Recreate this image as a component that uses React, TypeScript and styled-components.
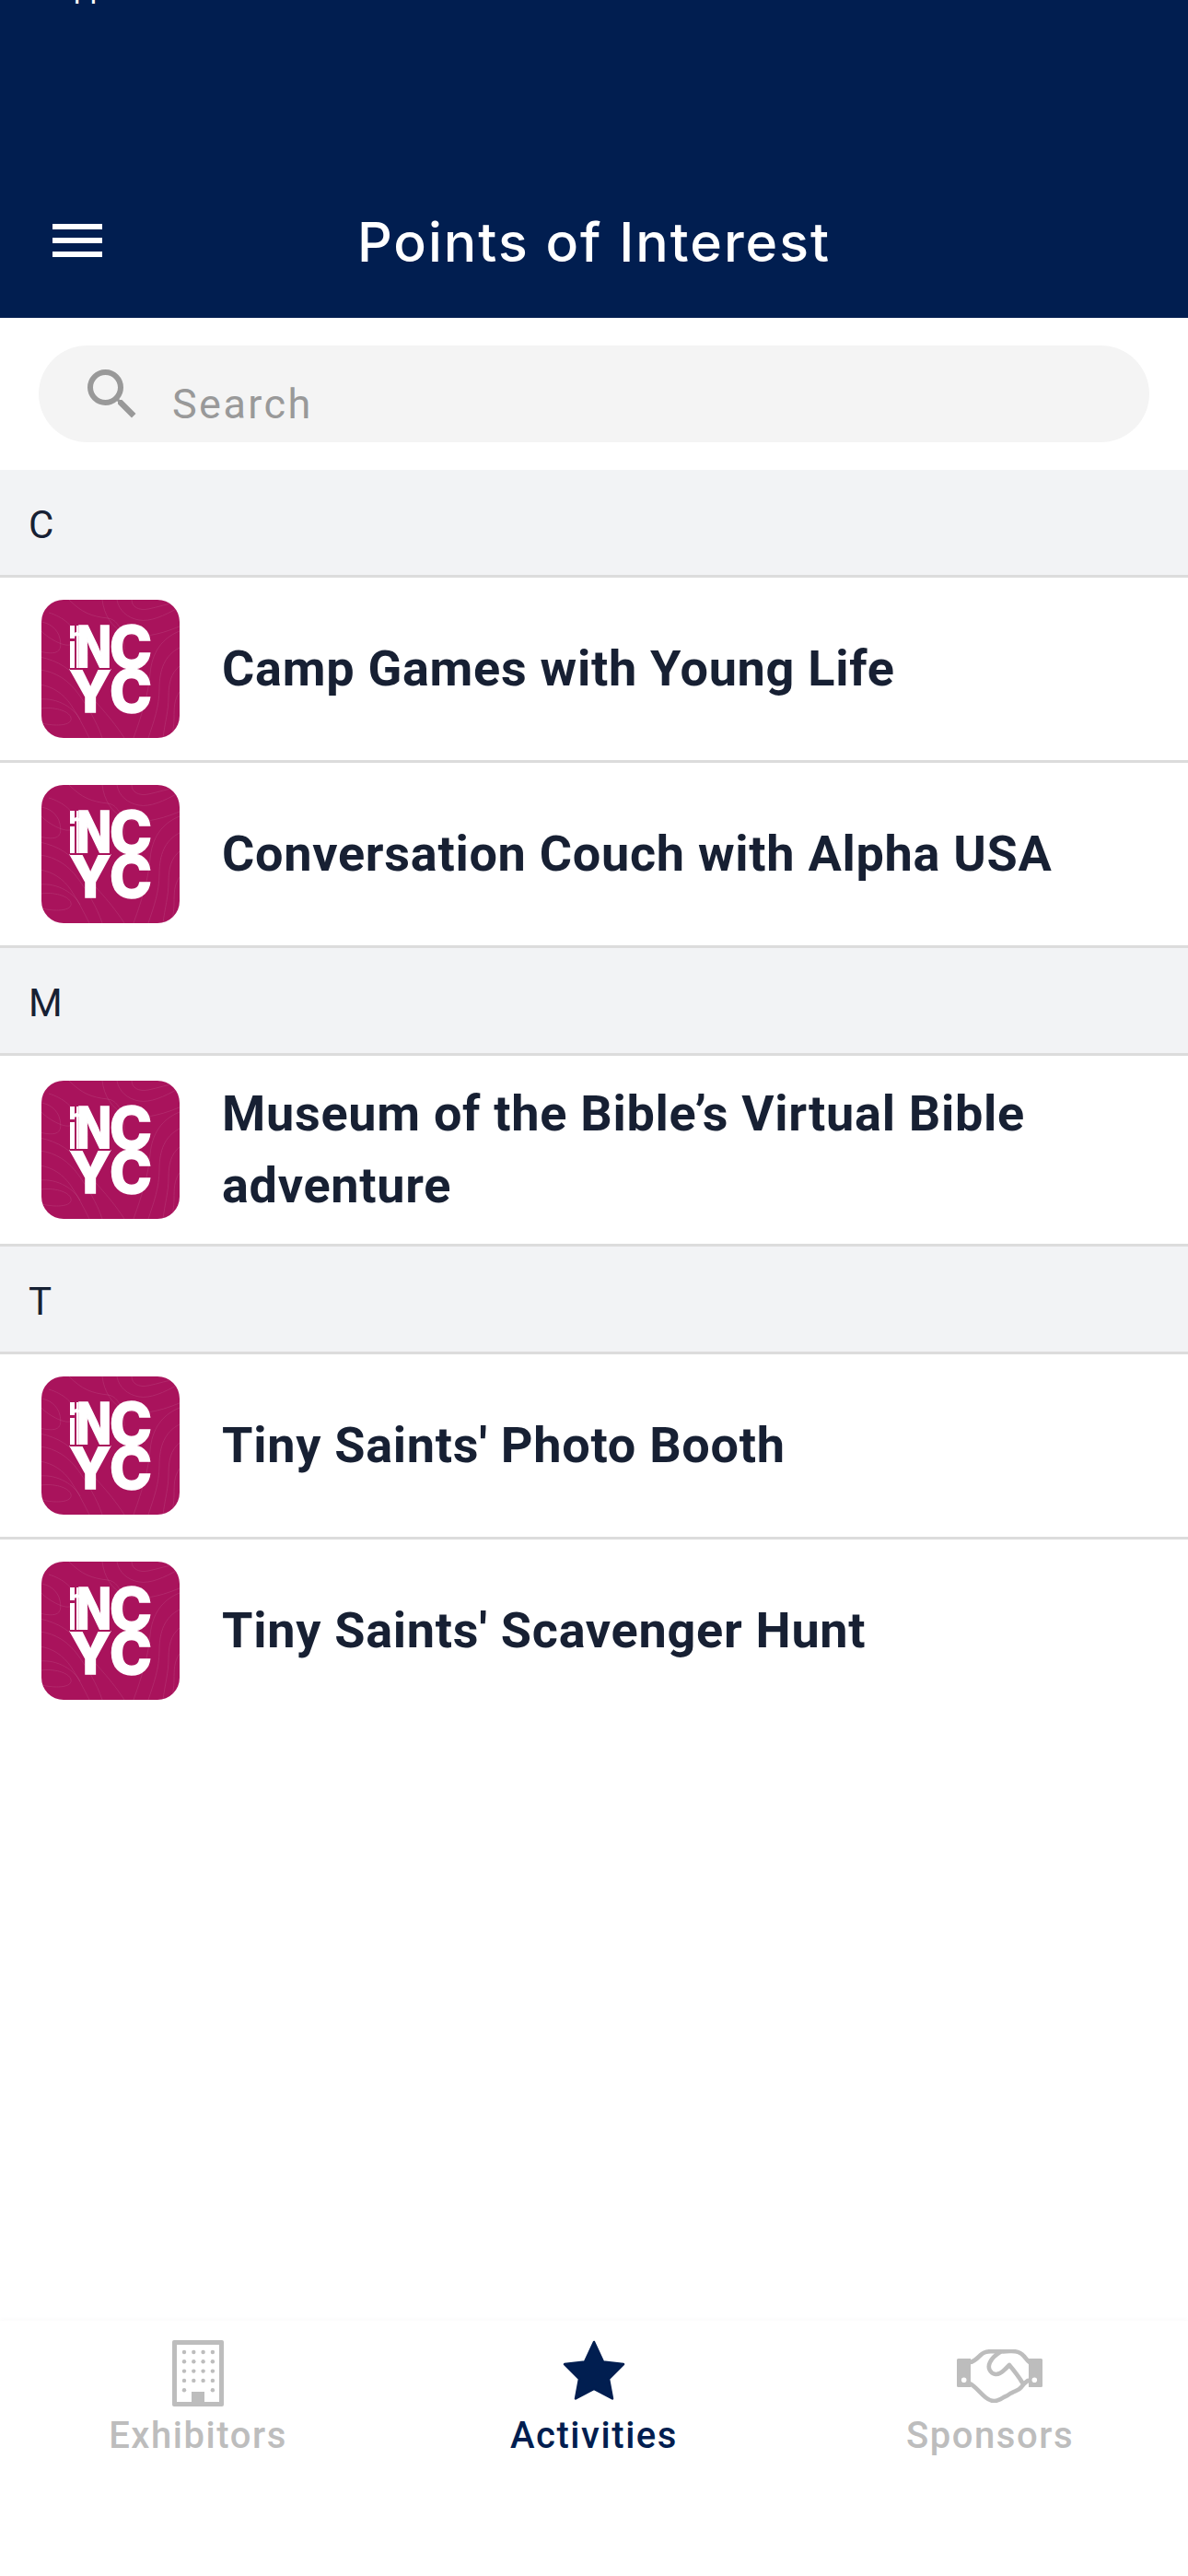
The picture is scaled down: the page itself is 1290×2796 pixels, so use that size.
import React from 'react';
import styled, { createGlobalStyle } from 'styled-components';

const Global = createGlobalStyle`
  html, body { margin: 0; padding: 0; background: #fff; }
  * { box-sizing: border-box; }
`;

const Page = styled.div`
  width: 1290px;
  height: 2796px;
  display: flex;
  flex-direction: column;
  background: #fff;
  overflow: hidden;
  font-family: Roboto, "Liberation Sans", sans-serif;
`;

const Header = styled.header`
  position: relative;
  height: 345px;
  flex: none;
  background: #011e50;
  overflow: hidden;
`;

const ClippedStatus = styled.div`
  position: absolute;
  left: 25px;
  top: -33px;
  font-size: 32px;
  line-height: 40px;
  color: #fff;
  white-space: nowrap;
`;

const TitleBar = styled.div`
  position: absolute;
  left: 0;
  right: 0;
  bottom: 0;
  height: 120px;
  display: flex;
  align-items: center;
  justify-content: center;
`;

const MenuButton = styled.div`
  position: absolute;
  left: 57px;
  top: 18px;
  width: 54px;
  height: 36px;
  display: flex;
  flex-direction: column;
  justify-content: space-between;
`;

const MenuBar = styled.span`
  display: block;
  height: 6px;
  background: #fff;
`;

const Title = styled.h1`
  margin: 0;
  position: relative;
  top: -22px;
  font-family: Inter, "Open Sans", sans-serif;
  font-weight: 500;
  font-size: 59px;
  line-height: 70px;
  letter-spacing: 2px;
  color: #fff;
`;

const SearchWrap = styled.div`
  flex: none;
  height: 165px;
  padding: 30px 42px;
`;

const SearchBox = styled.div`
  height: 105px;
  border-radius: 53px;
  background: #f4f4f4;
  display: flex;
  align-items: center;
  padding-left: 53px;
`;

const SearchLabel = styled.span`
  margin-left: 38px;
  margin-top: 22px;
  font-size: 45px;
  line-height: 50px;
  letter-spacing: 2.4px;
  color: #999;
`;

const SectionHeader = styled.div`
  height: 117px;
  flex: none;
  background: #f2f3f5;
  border-bottom: 3px solid #dcdcdc;
  padding: 35px 0 0 31px;
  font-size: 42px;
  line-height: 50px;
  color: #172033;
`;

const Row = styled.div<{ $tall?: boolean; $last?: boolean }>`
  flex: none;
  height: ${p => (p.$tall ? 207 : 201)}px;
  display: flex;
  align-items: center;
  padding: 0 60px 0 45px;
  border-bottom: 3px solid ${p => (p.$last ? 'transparent' : '#dcdcdc')};
`;

const RowTitle = styled.div`
  margin-left: 46px;
  font-size: 54px;
  line-height: 78px;
  font-weight: 700;
  letter-spacing: 0.72px;
  color: #172033;
`;

const TabBar = styled.nav`
  margin-top: auto;
  height: 277px;
  flex: none;
  display: grid;
  grid-template-columns: repeat(3, 1fr);
  padding-top: 21px;
  box-shadow: 0 -3px 4px rgba(0, 0, 0, 0.015);
`;

const Tab = styled.div<{ $active?: boolean }>`
  display: flex;
  flex-direction: column;
  align-items: center;
  color: ${p => (p.$active ? '#011e50' : '#bdbdbd')};
`;

const TabIcon = styled.div`
  height: 82px;
  display: flex;
  align-items: flex-start;
  justify-content: center;
`;

const HandshakeSvg = styled.svg`
  margin: 10px 0 0 20px;
`;

const TabLabel = styled.span`
  margin-top: -3px;
  font-size: 40px;
  line-height: 50px;
  font-weight: 500;
  letter-spacing: 1.55px;
`;

const LogoSvg = styled.svg`
  flex: none;
`;

const Logo = () => (
  <LogoSvg width="150" height="150" viewBox="0 0 150 150">
    <defs>
      <clipPath id="logoClip">
        <rect width="150" height="150" rx="24" />
      </clipPath>
    </defs>
    <rect width="150" height="150" rx="24" fill="#a9135c" />
    <g clipPath="url(#logoClip)" fill="none" stroke="#fff" strokeOpacity=".09" strokeWidth="1">
      <path d="M8 14c14 4 32 16 28 30S4 40-2 32" />
      <path d="M-2 62c20 4 36 14 46 30s28 30 46 58" />
      <path d="M-2 76c18 2 32 12 42 26s20 30 26 48" />
      <path d="M-2 92c14 2 26 10 34 22s14 24 20 36" />
      <path d="M0 118c12-2 30 2 32 10s-14 10-32 6" />
      <path d="M-2 108c20-2 38 10 44 22" />
      <path d="M66 0c2 16 10 30 24 36s34 4 62-8" />
      <path d="M82 0c2 12 12 20 24 22s26-4 44-14" />
      <path d="M98 0c0 8 8 12 18 10s22-6 34-8" />
      <path d="M150 34c-20 8-30 24-32 46s-8 42-18 70" />
      <path d="M150 52c-16 8-22 24-22 44s-6 36-12 54" />
      <path d="M150 72c-10 8-12 20-12 34s-4 28-6 44" />
      <path d="M150 100c-6 8-6 18-6 28s-2 16-2 22" />
      <path d="M30 0c14 14 24 18 42 20s18 34 18 34" />
      <path d="M-2 24c10 0 20 8 22 18s2 20-22 14" />
    </g>
    <g fill="#fff">
      <rect x="31" y="28" width="5" height="14" />
      <rect x="31" y="45" width="5" height="29" />
      <rect x="38" y="28" width="2" height="46" />
      <path d="M31 40l20-2v-1l-11-1v-2l-9 4z" />
    </g>
    <g fill="#fff" fontFamily="Inter, Roboto, sans-serif" fontWeight="800" fontSize="63" stroke="#fff" strokeWidth="1.4">
      <text x="38" y="74" textLength="38" lengthAdjust="spacingAndGlyphs">N</text>
      <text x="74" y="74" textLength="46" lengthAdjust="spacingAndGlyphs">C</text>
      <text x="30" y="122" textLength="46" lengthAdjust="spacingAndGlyphs">Y</text>
      <text x="74" y="122" textLength="46" lengthAdjust="spacingAndGlyphs">C</text>
    </g>
    <rect x="31" y="74" width="44" height="2" fill="#a9135c" />
  </LogoSvg>
);

const SearchIcon = () => (
  <svg width="54" height="54" viewBox="3 3 18 18" fill="#999">
    <path d="M15.5 14h-.79l-.28-.27A6.471 6.471 0 0 0 16 9.5 6.5 6.5 0 1 0 9.5 16c1.61 0 3.09-.59 4.23-1.57l.27.28v.79l5 4.99L20.49 19l-4.99-5zm-6 0C7.01 14 5 11.99 5 9.5S7.01 5 9.5 5 14 7.01 14 9.5 11.99 14 9.5 14z" />
  </svg>
);

const BuildingIcon = () => {
  const dots: React.ReactElement[] = [];
  [0, 1, 2, 3, 4].forEach(r =>
    [0, 1, 2, 3].forEach(c => {
      if (r === 4 && (c === 1 || c === 2)) return;
      dots.push(<circle key={`${r}-${c}`} cx={13 + c * 10.3} cy={13 + r * 10.3} r={2.2} />);
    })
  );
  return (
    <svg width="56" height="72" viewBox="0 0 56 72" fill="currentColor">
      <path fillRule="evenodd" d="M2 0h52a2 2 0 0 1 2 2v68a2 2 0 0 1-2 2H2a2 2 0 0 1-2-2V2a2 2 0 0 1 2-2zm3 5v62h46V5z" />
      {dots}
      <rect x="21" y="56" width="14" height="12" />
    </svg>
  );
};

const StarIcon = () => (
  <svg width="68" height="66" viewBox="0 0 68 66" fill="currentColor" stroke="currentColor" strokeWidth="2.5" strokeLinejoin="round">
    <path d="M34 2l10 21.500 22 2.600-16 15.900 4 21.500L34 53 14 63.500 18 42 2 26.100l22-2.600z" />
  </svg>
);

const HandshakeIcon = () => (
  <HandshakeSvg width="93" height="58" viewBox="0 0 93 58">
    <g fill="currentColor">
      <path fillRule="evenodd" d="M1.500 10H15v31H1.500A1.500 1.500 0 0 1 0 39.500v-28A1.500 1.500 0 0 1 1.500 10zM7.700 30.500a2.800 2.800 0 1 0 0 5.600 2.800 2.800 0 0 0 0-5.600z" />
      <path fillRule="evenodd" d="M78 10h13.500a1.500 1.500 0 0 1 1.500 1.500v28a1.500 1.500 0 0 1-1.500 1.500H78zM84.300 30.500a2.800 2.800 0 1 0 0 5.600 2.800 2.800 0 0 0 0-5.600z" />
    </g>
    <g fill="none" stroke="currentColor" strokeWidth="4.600" strokeLinejoin="round" strokeLinecap="round">
      <path d="M14 14c4 0 8-4 12-8 3-3 7-3.800 11-3.800h7c5 0 6 .5 13-.2 8-.5 12 1 16 5.500 2 2.500 3 4.500 6 6.500" />
      <path d="M47 3c-5 3-9 7-11 11-3 6 0 12 6 13 5 .5 8-3 11-6l4-4c5 6 10 12 14 19" />
      <path d="M14 37c6 3 11 10 17 15 5 4 10 5 14 3 4-1 5-3 8-4 3-1 4-3 7-4 3-2 7-2 10-6 2-3 4-5 7-7" />
    </g>
  </HandshakeSvg>
);

const items = {
  C: ['Camp Games with Young Life', 'Conversation Couch with Alpha USA'],
  T: ["Tiny Saints' Photo Booth", "Tiny Saints' Scavenger Hunt"],
};

const ListRow = ({ text, tall, last }: { text: string; tall?: boolean; last?: boolean }) => (
  <Row $tall={tall} $last={last}>
    <Logo />
    <RowTitle>{text}</RowTitle>
  </Row>
);

export default function App() {
  return (
    <Page>
      <Global />
      <Header>
        <ClippedStatus>Shoppers at the Venue</ClippedStatus>
        <TitleBar>
          <MenuButton>
            <MenuBar />
            <MenuBar />
            <MenuBar />
          </MenuButton>
          <Title>Points of Interest</Title>
        </TitleBar>
      </Header>
      <SearchWrap>
        <SearchBox>
          <SearchIcon />
          <SearchLabel>Search</SearchLabel>
        </SearchBox>
      </SearchWrap>
      <SectionHeader>C</SectionHeader>
      {items.C.map(t => <ListRow key={t} text={t} />)}
      <SectionHeader>M</SectionHeader>
      <ListRow tall text="Museum of the Bible’s Virtual Bible adventure" />
      <SectionHeader>T</SectionHeader>
      {items.T.map((t, i) => <ListRow key={t} text={t} last={i === 1} />)}
      <TabBar>
        <Tab>
          <TabIcon><BuildingIcon /></TabIcon>
          <TabLabel>Exhibitors</TabLabel>
        </Tab>
        <Tab $active>
          <TabIcon><StarIcon /></TabIcon>
          <TabLabel>Activities</TabLabel>
        </Tab>
        <Tab>
          <TabIcon><HandshakeIcon /></TabIcon>
          <TabLabel>Sponsors</TabLabel>
        </Tab>
      </TabBar>
    </Page>
  );
}
